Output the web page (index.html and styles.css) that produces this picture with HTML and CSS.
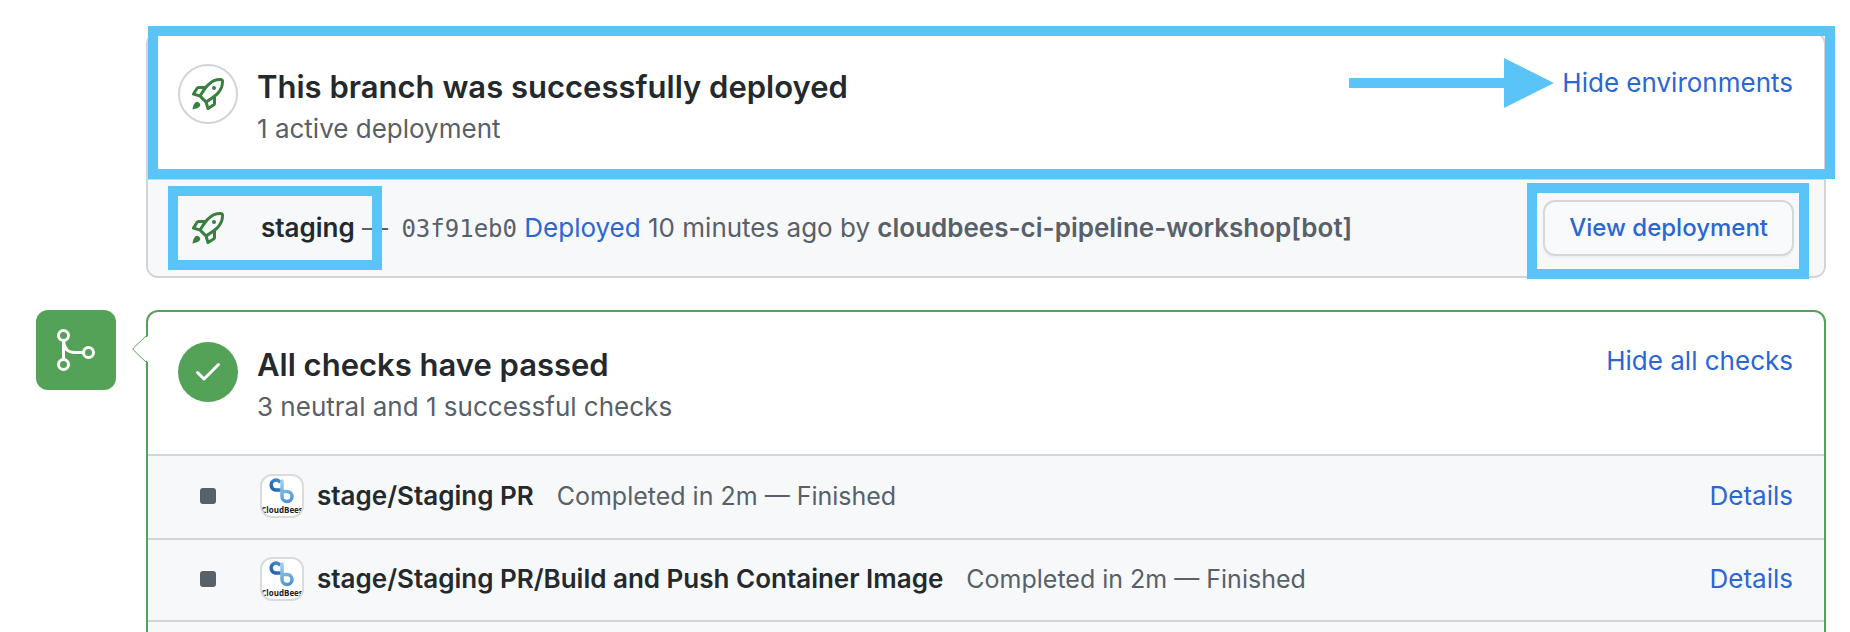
FILE: index.html
```html
<!DOCTYPE html>
<html lang="en">
<head>
<meta charset="utf-8">
<meta name="viewport" content="width=device-width, initial-scale=1">
<title>Deployment and checks</title>
<link rel="stylesheet" href="styles.css">
</head>
<body>
<svg class="defs" width="0" height="0" aria-hidden="true">
  <defs>
    <linearGradient id="loop-dark" x1="0" y1="1" x2="1" y2="0"><stop offset="0" stop-color="#1f5fa8"/><stop offset="1" stop-color="#4a90cf"/></linearGradient>
    <linearGradient id="loop-light" gradientUnits="userSpaceOnUse" x1="20" y1="4" x2="28" y2="26"><stop offset="0" stop-color="#a3d0ee"/><stop offset="1" stop-color="#4b93d3"/></linearGradient>
    <symbol id="rocket" viewBox="0 0 16 16"><path fill-rule="evenodd" d="M14.064 0a8.75 8.75 0 00-6.187 2.563l-.459.458c-.314.314-.616.641-.904.979H3.31a1.75 1.75 0 00-1.49.833L.11 7.607a.75.75 0 00.418 1.11l3.102.954c.037.051.079.1.124.145l2.429 2.428c.046.046.094.088.145.125l.954 3.102a.75.75 0 001.11.418l2.774-1.707a1.75 1.75 0 00.833-1.49V9.485c.338-.288.665-.59.979-.904l.458-.459A8.75 8.75 0 0016 1.936V1.75A1.75 1.75 0 0014.25 0h-.186zM10.5 10.625c-.088.06-.177.118-.266.175l-2.35 1.521.548 1.783 1.949-1.2a.25.25 0 00.119-.213v-2.066zM3.678 8.116L5.2 5.766c.058-.09.117-.178.176-.266H3.309a.25.25 0 00-.213.119l-1.2 1.95 1.782.547zm5.26-4.493A7.25 7.25 0 0114.063 1.5h.186a.25.25 0 01.25.25v.186a7.25 7.25 0 01-2.123 5.127l-.459.458a15.21 15.21 0 01-2.499 2.02l-2.317 1.5-2.143-2.143 1.5-2.317a15.25 15.25 0 012.02-2.5l.458-.458h.002zM12 5a1 1 0 11-2 0 1 1 0 012 0zm-8.44 9.56a1.5 1.5 0 10-2.12-2.12c-.734.73-1.047 2.332-1.15 3.003a.23.23 0 00.265.265c.671-.103 2.273-.416 3.005-1.148z"/></symbol>
    <symbol id="cloudbees" viewBox="0 0 40 40">
      <path d="M18.500 6.500A5 5 0 1 0 14.500 14H20" fill="none" stroke="url(#loop-dark)" stroke-width="3.500"/>
      <path d="M20 5V20.500A5 5 0 1 0 25 15.500H21" fill="none" stroke="url(#loop-light)" stroke-width="3.500" stroke-linecap="round"/>
      <text x="20" y="37" text-anchor="middle" class="logo-text">CloudBees</text>
    </symbol>
  </defs>
</svg>
<main class="timeline">
  <section class="card deploy">
    <header class="head">
      <span class="status ring"><svg class="rocket" aria-hidden="true"><use href="#rocket"/></svg></span>
      <div class="copy">
        <h2 class="title">This branch was successfully deployed</h2>
        <p class="sub">1 active deployment</p>
      </div>
      <span class="toggle"><svg class="pointer" viewBox="0 0 205 50" aria-hidden="true"><path d="M0 20H155V0L205 25L155 50V30H0Z"/></svg><a href="#">Hide environments</a></span>
      <span class="mark mark-head"></span>
    </header>
    <div class="env">
      <svg class="rocket env-icon" aria-hidden="true"><use href="#rocket"/></svg>
      <p class="env-text"><strong class="name">staging</strong> — <code class="sha">03f91eb0</code> <a href="#">Deployed</a> 10 minutes ago by <strong>cloudbees-ci-pipeline-workshop[bot]</strong></p>
      <span class="action"><button class="btn" type="button">View deployment</button><span class="mark mark-btn"></span></span>
      <span class="mark mark-env"></span>
    </div>
  </section>

  <span class="badge"><svg class="merge" viewBox="0 0 44 44" aria-hidden="true"><circle cx="9.500" cy="7.500" r="5"/><circle cx="9.500" cy="36.500" r="5"/><circle cx="34.500" cy="24.500" r="5"/><path d="M9.500 12.500V31.500M9.500 13C10 20.500 14 24.500 21 24.500H29.500"/></svg></span>
  <section class="card checks">
    <svg class="notch" viewBox="0 0 18 32" aria-hidden="true"><path class="notch-fill" d="M18 1L2 16L18 31Z"/><path class="notch-line" d="M16 1L1.500 15Q.5 16 1.500 17L16 31"/></svg>
    <header class="head">
      <span class="status passed"><svg class="tick" viewBox="0 0 28 22" aria-hidden="true"><path d="M3.500 11.500L10 18L24.500 3.500"/></svg></span>
      <div class="copy">
        <h2 class="title">All checks have passed</h2>
        <p class="sub">3 neutral and 1 successful checks</p>
      </div>
      <span class="toggle"><a href="#">Hide all checks</a></span>
    </header>
    <ul class="list">
      <li class="check"><span class="neutral"></span><svg class="avatar"><use href="#cloudbees"/></svg><strong class="name">stage/Staging PR</strong><span class="result">Completed in 2m — Finished</span><a href="#">Details</a></li>
      <li class="check"><span class="neutral"></span><svg class="avatar"><use href="#cloudbees"/></svg><strong class="name">stage/Staging PR/Build and Push Container Image</strong><span class="result">Completed in 2m — Finished</span><a href="#">Details</a></li>
      <li class="check"></li>
    </ul>
  </section>
</main>
</body>
</html>
```
FILE: styles.css
```css
* { box-sizing: border-box; }

body {
  margin: 0;
  height: 100vh;
  overflow: hidden;
  background: #fff;
  color: #586069;
  font: 26px/38px Inter, "Liberation Sans", sans-serif;
}

h2, p, ul { margin: 0; padding: 0; }
a { color: #2a66d4; text-decoration: none; }
strong { font-weight: 600; }
.defs { position: absolute; }

.timeline {
  display: grid;
  grid-template-columns: 80px minmax(0, 1fr);
  align-items: start;
  gap: 32px 30px;
  height: 100vh;
  overflow: hidden;
  padding: 32px 24px 0 36px;
}

.card {
  position: relative;
  grid-column: 2;
  border: 2px solid #d1d5da;
  border-radius: 12px;
}
.checks { border-color: #54a257; }

.head {
  position: relative;
  display: flex;
  gap: 19px;
  padding: 30px 31px 26px 30px;
  border-bottom: 2px solid #d1d5da;
}
.deploy .head { padding-bottom: 28px; }

.status {
  display: grid;
  flex: none;
  place-items: center;
  width: 60px;
  height: 60px;
  border-radius: 50%;
}
.ring { border: 2px solid #d1d5da; }
.passed { background: #54a257; }
.rocket { width: 32px; height: 32px; fill: #3b7f3e; }
.tick { width: 28px; height: 22px; fill: none; stroke: #fff; stroke-width: 3; stroke-linecap: round; stroke-linejoin: round; }

.copy { flex: 1; padding-top: 2px; }
.title { color: #24292e; font-size: 31px; font-weight: 600; line-height: 42px; }
.sub { line-height: 42px; }

.toggle { position: relative; }
.pointer { position: absolute; right: calc(100% + 8px); top: -6px; width: 205px; height: 50px; fill: #5ac4f9; }

.env {
  position: relative;
  display: flex;
  align-items: center;
  padding: 20px 30px;
  background: #f6f8fa;
  border-radius: 0 0 10px 10px;
}
.env-icon { flex: none; margin: 0 37px 0 14px; }
.env-text { flex: 1; }
.name { color: #24292e; }
.sha { margin-left: 6px; font: 24px "DejaVu Sans Mono", monospace; }
.action { position: relative; display: flex; }

.btn {
  padding: 7px 24px;
  border: 2px solid #d5d8db;
  border-radius: 12px;
  background: #f9fafb;
  box-shadow: 0 2px 0 rgba(27, 31, 35, .04);
  color: #2a66d4;
  font: 500 24px/38px Inter, "Liberation Sans", sans-serif;
}

.mark { position: absolute; border: 10px solid #5ac4f9; pointer-events: none; }
.mark-head { inset: -8px -11px -1px 0; }
.mark-env { left: 20px; top: 6px; width: 214px; height: 84px; }
.mark-btn { inset: -17px -15px -23px -16px; }

.badge {
  display: grid;
  place-items: center;
  width: 80px;
  height: 80px;
  border-radius: 12px;
  background: #54a257;
}
.merge { width: 44px; height: 44px; fill: none; stroke: #fff; stroke-width: 3; }

.notch { position: absolute; left: -16px; top: 21px; width: 18px; height: 32px; }
.notch-fill { fill: #fff; }
.notch-line { fill: none; stroke: #54a257; stroke-width: 1; }

.list { list-style: none; }
.check {
  display: flex;
  align-items: center;
  min-height: 82px;
  padding: 0 31px 2px 30px;
  background: #f6f8fa;
  border-bottom: 2px solid #d1d5da;
}
.check:first-child { min-height: 84px; }
.neutral { width: 16px; height: 16px; margin: 0 44px 0 22px; border-radius: 3px; background: #586069; }
.avatar { width: 44px; height: 44px; margin-right: 13px; border: 2px solid #d9dbdd; border-radius: 12px; background: #fff; }
.logo-text { font: 700 8px "Open Sans", sans-serif; fill: #222; }
.result { flex: 1; margin-left: 23px; font-size: 25px; }
```
